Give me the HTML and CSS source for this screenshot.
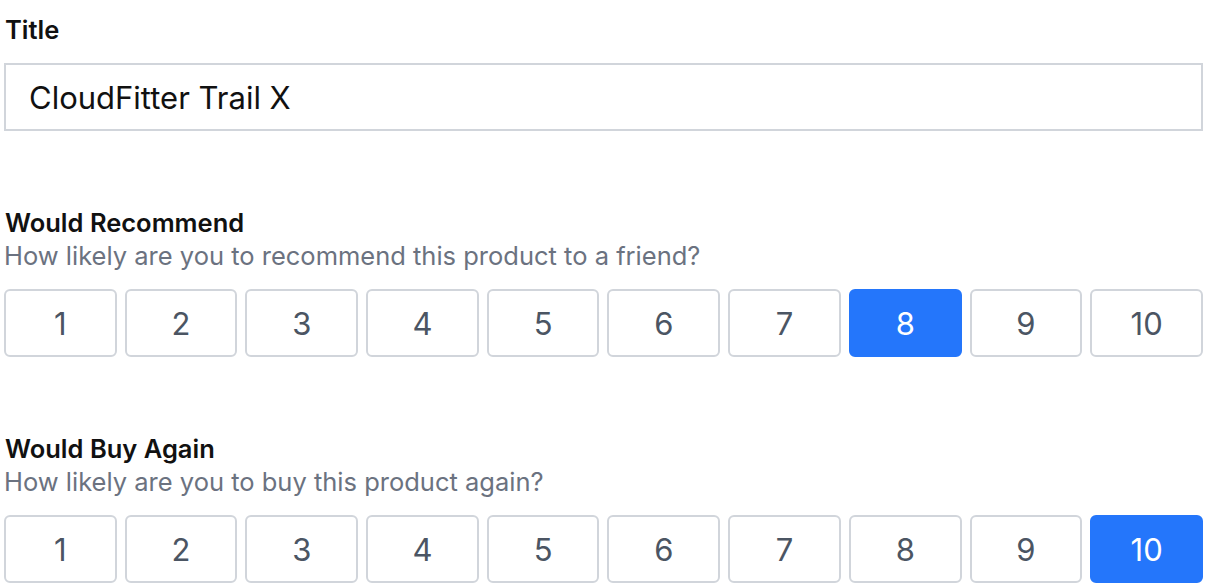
FILE: index.html
```html
<!DOCTYPE html>
<html lang="en">
<head>
<meta charset="utf-8">
<title>Product Review</title>
<link rel="stylesheet" href="styles.css">
</head>
<body>
<form class="form">
  <div class="field field-title">
    <label class="label" for="title">Title</label>
    <input class="text-input" id="title" type="text" value="CloudFitter Trail X">
  </div>

  <div class="field">
    <div class="label">Would Recommend</div>
    <div class="hint">How likely are you to recommend this product to a friend?</div>
    <div class="scale">
      <button type="button" class="opt">1</button>
      <button type="button" class="opt">2</button>
      <button type="button" class="opt">3</button>
      <button type="button" class="opt">4</button>
      <button type="button" class="opt">5</button>
      <button type="button" class="opt">6</button>
      <button type="button" class="opt">7</button>
      <button type="button" class="opt selected">8</button>
      <button type="button" class="opt">9</button>
      <button type="button" class="opt">10</button>
    </div>
  </div>

  <div class="field">
    <div class="label">Would Buy Again</div>
    <div class="hint">How likely are you to buy this product again?</div>
    <div class="scale">
      <button type="button" class="opt">1</button>
      <button type="button" class="opt">2</button>
      <button type="button" class="opt">3</button>
      <button type="button" class="opt">4</button>
      <button type="button" class="opt">5</button>
      <button type="button" class="opt">6</button>
      <button type="button" class="opt">7</button>
      <button type="button" class="opt">8</button>
      <button type="button" class="opt">9</button>
      <button type="button" class="opt selected">10</button>
    </div>
  </div>
</form>
</body>
</html>
```

FILE: styles.css
```css
html, body {
  margin: 0;
  padding: 0;
  background: #ffffff;
}

body {
  font-family: Inter, "Noto Sans", sans-serif;
  color: #111827;
}

.form {
  display: flex;
  flex-direction: column;
  gap: 77px;
  padding: 15px 5px 0 4px;
}

.field {
  display: flex;
  flex-direction: column;
}

.label {
  display: block;
  font-size: 25.5px;
  font-weight: 600;
  line-height: 30px;
  padding-left: 1px;
  color: #111111;
}

.field-title .label {
  margin-bottom: 18px;
}

.text-input {
  box-sizing: border-box;
  height: 68px;
  width: 100%;
  border: 2px solid #d1d5db;
  border-radius: 0;
  padding: 0 0 0 23px;
  font-family: Inter, "Noto Sans", sans-serif;
  font-size: 31px;
  color: #111111;
  background: #ffffff;
  outline: none;
}

.hint {
  font-size: 25.5px;
  line-height: 30px;
  margin-top: 3px;
  padding-left: 0;
  color: #6b7280;
}

.scale {
  display: grid;
  grid-template-columns: repeat(10, 1fr);
  gap: 8px;
  margin-top: 18px;
}

.opt {
  box-sizing: border-box;
  height: 68px;
  border: 2px solid #d1d5db;
  border-radius: 6px;
  background: #ffffff;
  font-family: Inter, "Noto Sans", sans-serif;
  font-size: 31px;
  color: #4b5563;
  padding: 0;
  margin: 0;
}

.opt.selected {
  background: #2476fb;
  border-color: #2476fb;
  color: #ffffff;
}
```
